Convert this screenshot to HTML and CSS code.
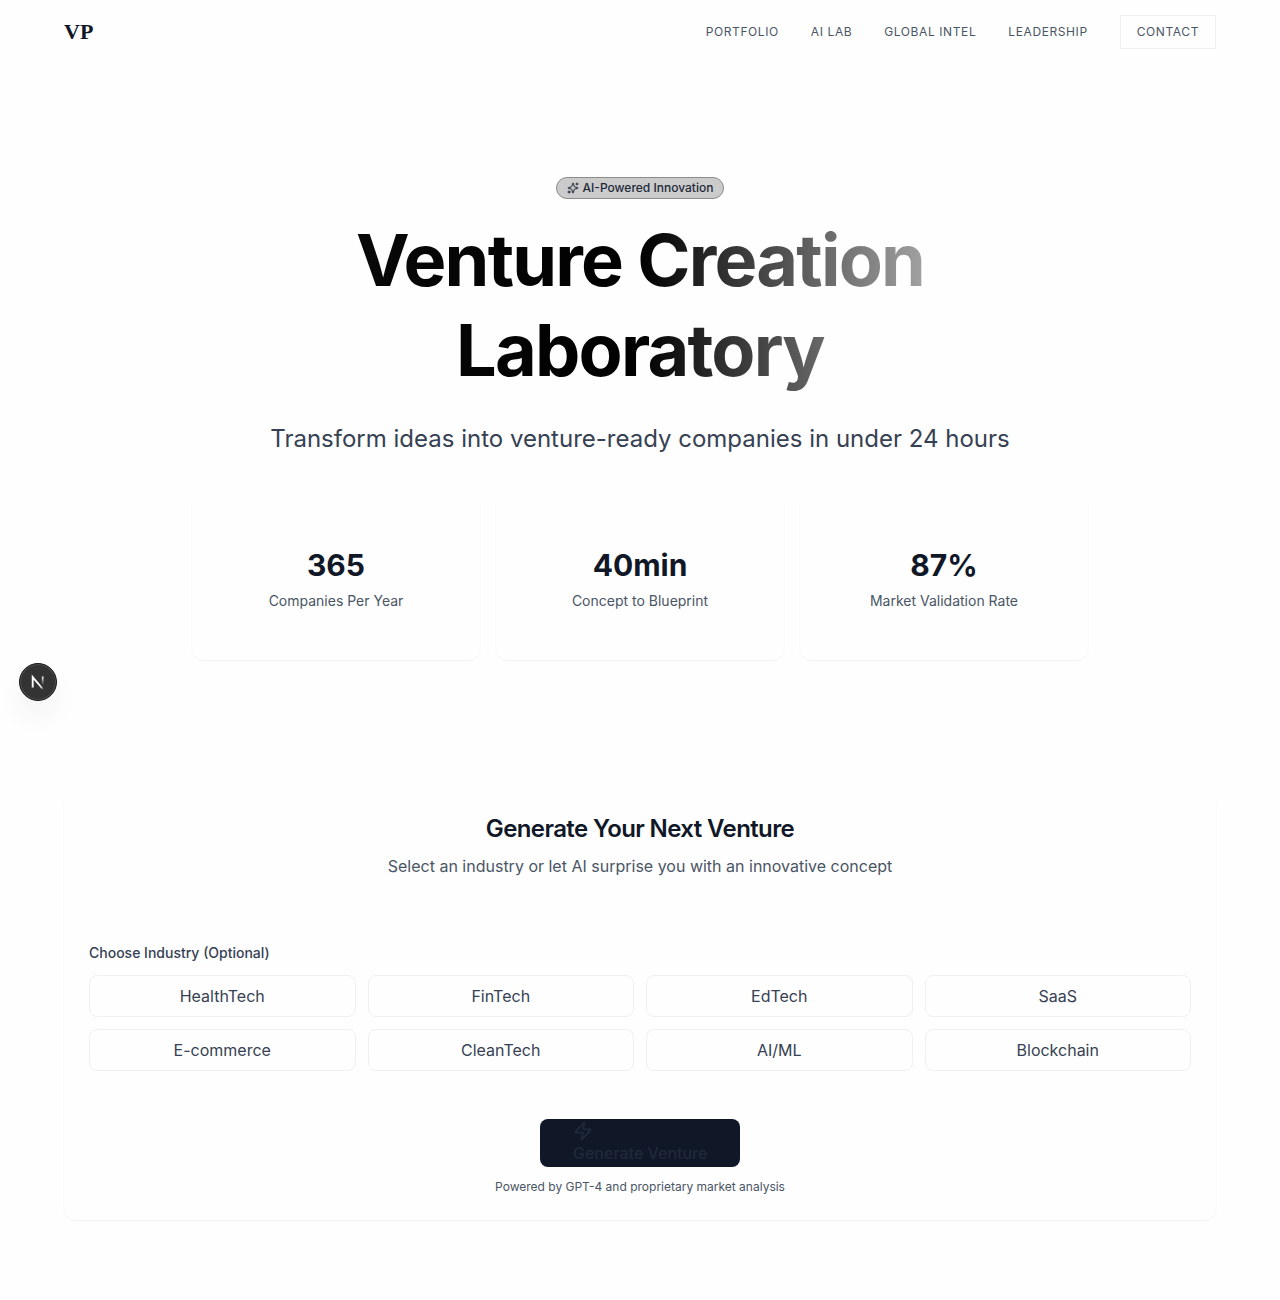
FILE: index.html
```
<!DOCTYPE html>
<html lang="en">
<head>
<meta charset="utf-8">
<title>Venture Creation Laboratory</title>
<link rel="stylesheet" href="styles.css">
</head>
<body>
<header class="nav">
  <a class="logo">VP</a>
  <nav class="links"><a>PORTFOLIO</a><a>AI LAB</a><a>GLOBAL INTEL</a><a>LEADERSHIP</a><a class="contact">CONTACT</a></nav>
</header>
<main>
  <section class="hero">
    <div class="badge">
      <svg width="12" height="12" viewBox="0 0 24 24" fill="none" stroke="currentColor" stroke-width="2" stroke-linecap="round" stroke-linejoin="round"><path d="M11.017 2.814a1 1 0 0 1 1.966 0l1.051 5.558a2 2 0 0 0 1.594 1.594l5.558 1.051a1 1 0 0 1 0 1.966l-5.558 1.051a2 2 0 0 0-1.594 1.594l-1.051 5.558a1 1 0 0 1-1.966 0l-1.051-5.558a2 2 0 0 0-1.594-1.594l-5.558-1.051a1 1 0 0 1 0-1.966l5.558-1.051a2 2 0 0 0 1.594-1.594z"/><path d="M20 2v4M22 4h-4"/><circle cx="4" cy="20" r="2"/></svg>
      <span>AI-Powered Innovation</span>
    </div>
    <h1 class="title">Venture Creation Laboratory</h1>
    <p class="subtitle">Transform ideas into venture-ready companies in under 24 hours</p>
    <div class="stats">
      <div class="stat"><div class="value">365</div><div class="label">Companies Per Year</div></div>
      <div class="stat"><div class="value">40min</div><div class="label">Concept to Blueprint</div></div>
      <div class="stat"><div class="value">87%</div><div class="label">Market Validation Rate</div></div>
    </div>
  </section>
  <section class="generator">
    <h2 class="heading">Generate Your Next Venture</h2>
    <p class="lead">Select an industry or let AI surprise you with an innovative concept</p>
    <div class="field">Choose Industry (Optional)</div>
    <div class="industries">
      <button class="industry">HealthTech</button><button class="industry">FinTech</button><button class="industry">EdTech</button><button class="industry">SaaS</button>
      <button class="industry">E-commerce</button><button class="industry">CleanTech</button><button class="industry">AI/ML</button><button class="industry">Blockchain</button>
    </div>
    <button class="generate">
      <svg width="20" height="20" viewBox="0 0 24 24" fill="none" stroke="currentColor" stroke-width="2" stroke-linecap="round" stroke-linejoin="round"><path d="M4 14a1 1 0 0 1-.78-1.63l9.9-10.2a.5.5 0 0 1 .86.46l-1.92 6.02A1 1 0 0 0 13 10h7a1 1 0 0 1 .78 1.63l-9.9 10.2a.5.5 0 0 1-.86-.46l1.92-6.02A1 1 0 0 0 11 14z"/></svg>
      <span>Generate Venture</span>
    </button>
    <p class="note">Powered by GPT-4 and proprietary market analysis</p>
  </section>
</main>
<div class="devtools">
  <svg width="38" height="38" viewBox="0 0 38 38" fill="none">
    <defs>
      <linearGradient id="diagonal" x1="20" y1="20" x2="25" y2="26" gradientUnits="userSpaceOnUse"><stop stop-color="#fff"/><stop offset=".6" stop-color="#fff" stop-opacity=".8"/><stop offset="1" stop-color="#fff" stop-opacity="0"/></linearGradient>
      <linearGradient id="stem" x1="24" y1="13.5" x2="24" y2="22" gradientUnits="userSpaceOnUse"><stop stop-color="#fff"/><stop offset="1" stop-color="#fff" stop-opacity="0"/></linearGradient>
    </defs>
    <path d="M13.7 24.5V14.2L24.2 26.5" stroke="url(#diagonal)" stroke-width="1.9"/>
    <path d="M23.7 13.5v9" stroke="url(#stem)" stroke-width="1.7"/>
  </svg>
</div>
</body>
</html>
```
FILE: styles.css
```
* { box-sizing: border-box; }
body { margin: 0; min-height: 1300px; background: #fefefe; color: #101828; font-family: Inter, sans-serif; font-size: 16px; line-height: 24px; }
h1, h2, p { margin: 0; }
button { font: inherit; }
.nav { height: 64px; padding: 0 64px; display: flex; align-items: center; justify-content: space-between; }
.logo { font: 700 22px/28px "Liberation Serif", serif; }
.links { display: flex; align-items: center; gap: 32px; font-size: 12px; line-height: 16px; letter-spacing: 0.6px; color: #4a5565; }
.contact { padding: 8px 16px; border: 1px solid #f0f0f0; }
.hero { width: 896px; margin: 0 auto; padding-top: 113px; text-align: center; display: flex; flex-direction: column; align-items: center; }
.badge { height: 22px; padding: 0 10px; border: 1px solid #8b8b8b; border-radius: 11px; background: #cbcbcb; display: flex; align-items: center; gap: 4px; font-size: 12px; font-weight: 500; line-height: 16px; color: #1e2939; }
.title { margin-top: 16px; width: 896px; font-size: 72px; line-height: 90px; font-weight: 700; letter-spacing: -1.8px; color: transparent; background: linear-gradient(90deg, #0d0d0d 0%, #000 50%, #fefefe 100%); background-clip: text; -webkit-background-clip: text; }
.subtitle { margin-top: 26px; font-size: 24px; line-height: 36px; color: #364153; }
.stats { margin-top: 36px; width: 100%; display: grid; grid-template-columns: repeat(3, 1fr); gap: 16px; }
.stat { height: 167px; padding-top: 54px; border-radius: 12px; box-shadow: 0 1px 2px rgba(0, 0, 0, 0.05); background: #fefefe; }
.value { font-size: 30px; line-height: 36px; font-weight: 700; }
.label { margin-top: 8px; font-size: 14px; line-height: 20px; color: #4a5565; }
.generator { margin: 132px 64px 0; height: 428px; padding: 24px 25px; border-radius: 12px; box-shadow: 0 1px 2px rgba(0, 0, 0, 0.05); text-align: center; }
.heading { padding-top: 1px; font-size: 24px; line-height: 24px; font-weight: 600; letter-spacing: -0.6px; }
.lead { margin-top: 13px; color: #4a5565; }
.field { margin-top: 65px; text-align: left; font-size: 14px; font-weight: 500; line-height: 20px; color: #364153; }
.industries { margin-top: 12px; display: grid; grid-template-columns: repeat(4, 1fr); gap: 12px; }
.industry { height: 42px; padding: 0; background: transparent; border: 1px solid #f0f0f0; border-radius: 8px; color: #364153; }
.generate { margin-top: 48px; width: 200px; height: 48px; padding: 2px 0 2px 33px; border: 0; border-radius: 8px; background: #101828; color: #1e2939; font-weight: 500; display: inline-flex; flex-direction: column; align-items: flex-start; }
.generate span { line-height: 24px; white-space: nowrap; }
.note { margin-top: 12px; font-size: 12px; line-height: 16px; color: #4a5565; }
.devtools { position: fixed; left: 19px; top: 663px; width: 38px; height: 38px; border-radius: 50%; background: #333; border: 1px solid #171717; box-shadow: inset 0 0 0 1px #505050, 0 16px 32px -8px rgba(0, 0, 0, 0.14); }
.devtools svg { display: block; margin: -1px; }
```
